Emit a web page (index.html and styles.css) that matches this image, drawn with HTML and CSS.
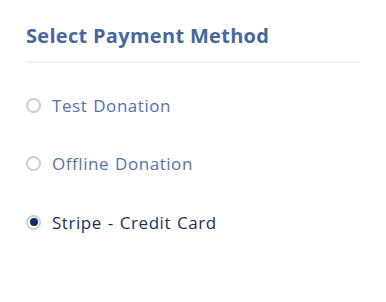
FILE: index.html
```html
<!DOCTYPE html>
<html lang="en">
<head>
    <meta charset="UTF-8">
    <meta name="viewport" content="width=device-width, initial-scale=1.0">
    <title>Select Payment Method</title>
    <link rel="stylesheet" href="styles.css">
</head>
<body>
    <div class="payment-box">
        <h3 class="payment-title">Select Payment Method</h3>
        <ul class="gateway-list">
            <li class="gateway-item">
                <label class="gateway-label">
                    <input type="radio" name="gateway" value="test">
                    <span class="gateway-name">Test Donation</span>
                </label>
            </li>
            <li class="gateway-item">
                <label class="gateway-label">
                    <input type="radio" name="gateway" value="offline">
                    <span class="gateway-name">Offline Donation</span>
                </label>
            </li>
            <li class="gateway-item selected">
                <label class="gateway-label">
                    <input type="radio" name="gateway" value="stripe" checked>
                    <span class="gateway-name">Stripe - Credit Card</span>
                </label>
            </li>
        </ul>
    </div>
</body>
</html>
```

FILE: styles.css
```css
body {
    margin: 0;
    padding: 0;
    background-color: #fff;
    font-family: 'Open Sans', sans-serif;
}
.payment-box {
    padding: 22px 26px 0 26px;
}
.payment-title {
    margin: 0;
    padding-bottom: 12px;
    font-size: 20px;
    font-weight: 700;
    letter-spacing: 0.3px;
    color: #4a6799;
    border-bottom: 2px solid #f1f1f1;
    width: 334px;
}
.gateway-list {
    list-style: none;
    margin: 0;
    padding: 0;
}
.gateway-item {
    height: 58.5px;
    display: flex;
    align-items: center;
}
.gateway-item:first-child {
    margin-top: 13px;
}
.gateway-label {
    display: flex;
    align-items: center;
    gap: 11px;
    cursor: pointer;
}
/* custom radio */
.gateway-label input {
    appearance: none;
    -webkit-appearance: none;
    margin: 0;
    width: 15px;
    height: 15px;
    border: 2px solid #cdcdcd;
    border-radius: 50%;
    box-sizing: border-box;
    display: grid;
    place-items: center;
}
.gateway-label input:checked::before {
    content: "";
    width: 8px;
    height: 8px;
    border-radius: 50%;
    background-color: #0d2b66;
}
.gateway-name {
    font-size: 17px;
    letter-spacing: 0.55px;
    word-spacing: 1px;
    color: #5a72a3;
}
.selected .gateway-name {
    color: #1a2f5e;
}
```
